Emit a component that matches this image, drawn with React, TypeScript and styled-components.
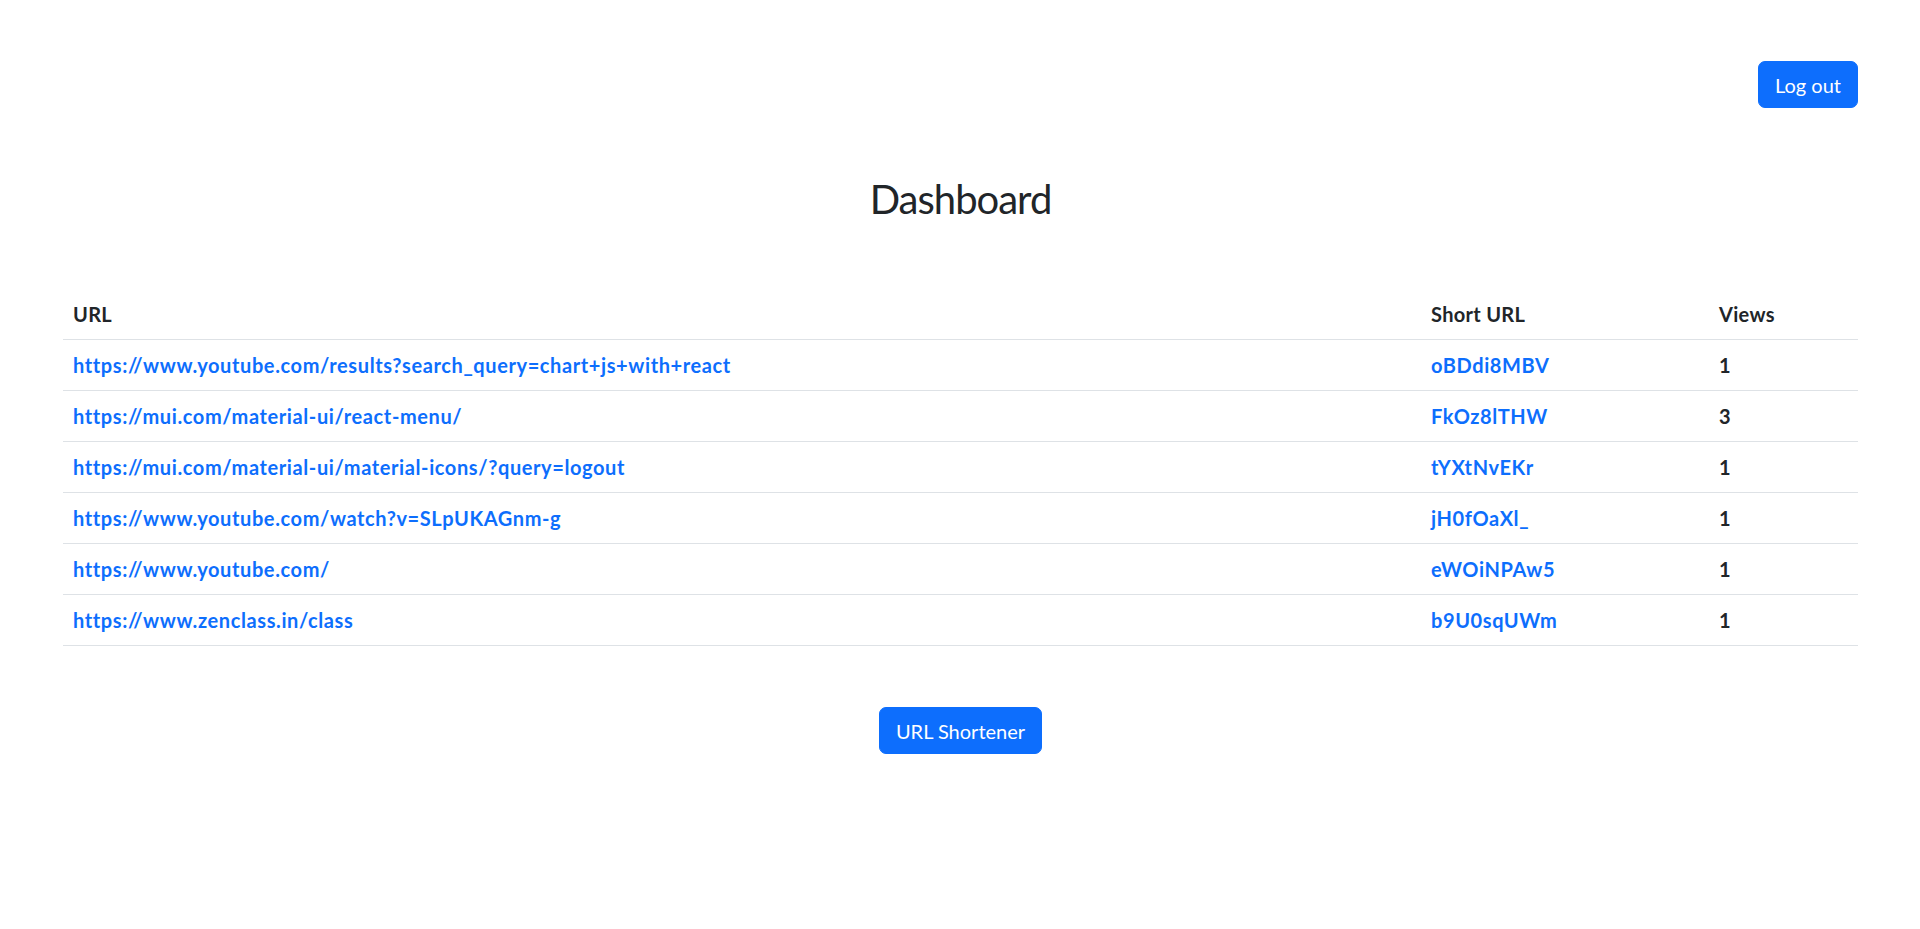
import React from "react";
import styled, { createGlobalStyle } from "styled-components";

const Global = createGlobalStyle`
  html, body { margin: 0; padding: 0; background: #fff; }
  body {
    font-family: Lato, "Noto Sans", "Liberation Sans", sans-serif;
    font-size: 20px;
    line-height: 30px;
    color: #212529;
  }
  * { box-sizing: border-box; }
`;

const Page = styled.div`
  padding: 61px 62px 60px 63px;
  display: flex;
  flex-direction: column;
`;

const TopBar = styled.div`
  display: flex;
  justify-content: flex-end;
`;

const Button = styled.button`
  font-family: inherit;
  font-size: 20px;
  line-height: 30px;
  color: #fff;
  background: #0d6efd;
  border: 1px solid #0d6efd;
  border-radius: 7px;
  padding: 7.5px 16px;
  cursor: pointer;
`;

const Title = styled.h2`
  margin: 67px 0 0;
  text-align: center;
  font-size: 40px;
  line-height: 48px;
  font-weight: 400;
  letter-spacing: -1px;
`;

const Table = styled.table`
  margin-top: 66px;
  width: 100%;
  border-collapse: collapse;
  table-layout: fixed;
`;

const Th = styled.th`
  text-align: left;
  font-weight: 700;
  padding: 10px;
  line-height: 30px;
  letter-spacing: 0.3px;
  border-bottom: 1px solid #dee2e6;
`;

const Td = styled.td`
  padding: 10px;
  line-height: 30px;
  font-weight: 700;
  letter-spacing: 0.6px;
  border-bottom: 1px solid #dee2e6;
  white-space: nowrap;
`;

const Link = styled.a`
  color: #0d6efd;
  text-decoration: none;
  font-weight: 700;
`;

const Footer = styled.div`
  display: flex;
  justify-content: center;
  margin-top: 61px;
`;

const rows = [
  ["https://www.youtube.com/results?search_query=chart+js+with+react", "oBDdi8MBV", 1],
  ["https://mui.com/material-ui/react-menu/", "FkOz8lTHW", 3],
  ["https://mui.com/material-ui/material-icons/?query=logout", "tYXtNvEKr", 1],
  ["https://www.youtube.com/watch?v=SLpUKAGnm-g", "jH0fOaXl_", 1],
  ["https://www.youtube.com/", "eWOiNPAw5", 1],
  ["https://www.zenclass.in/class", "b9U0sqUWm", 1],
];

export default function App() {
  return (
    <>
      <Global />
      <Page>
        <TopBar>
          <Button>Log out</Button>
        </TopBar>
        <Title>Dashboard</Title>
        <Table>
          <colgroup>
            <col style={{ width: 1358 }} />
            <col style={{ width: 288 }} />
            <col />
          </colgroup>
          <thead>
            <tr>
              <Th>URL</Th>
              <Th>Short URL</Th>
              <Th>Views</Th>
            </tr>
          </thead>
          <tbody>
            {rows.map(([u, s, v]) => (
              <tr key={String(s)}>
                <Td><Link href="#">{u}</Link></Td>
                <Td><Link href="#">{s}</Link></Td>
                <Td>{v}</Td>
              </tr>
            ))}
          </tbody>
        </Table>
        <Footer>
          <Button>URL Shortener</Button>
        </Footer>
      </Page>
    </>
  );
}
